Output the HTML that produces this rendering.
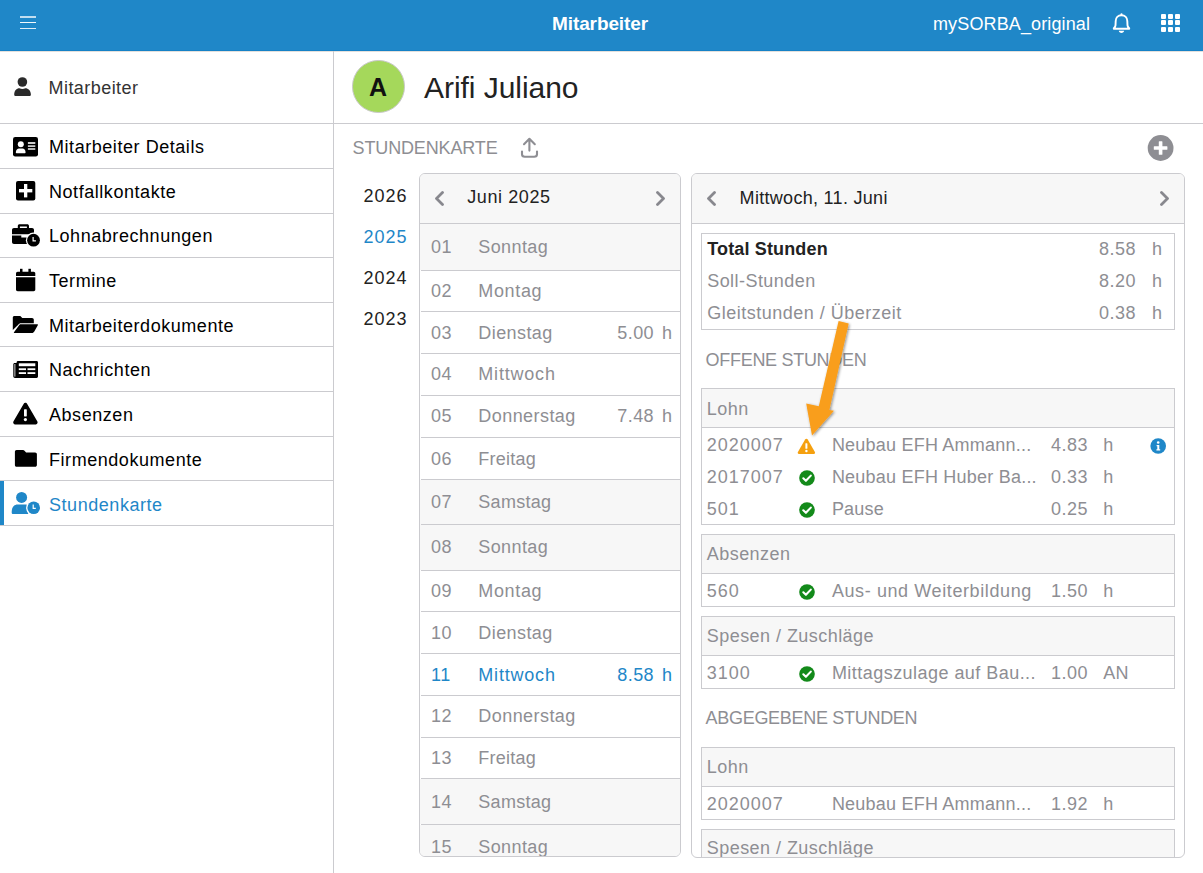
<!DOCTYPE html>
<html><head><meta charset="utf-8"><style>
html,body{margin:0;padding:0;}
body{width:1203px;height:873px;position:relative;overflow:hidden;background:#fff;font-family:"Liberation Sans",sans-serif;}
.t{position:absolute;white-space:nowrap;}
.r{position:absolute;}
</style></head><body>
<div class="r" style="left:0px;top:0px;width:1203px;height:51px;background:#1f87c8;"></div>
<div class="r" style="left:0px;top:50px;width:1203px;height:1px;background:#1581c6;"></div>
<div class="r" style="left:0px;top:51px;width:1203px;height:1px;background:#e4e0dc;"></div>
<div class="r" style="left:20px;top:16px;width:16px;height:1.7px;background:rgba(255,255,255,0.72);"></div>
<div class="r" style="left:20px;top:22px;width:16px;height:1.2px;background:rgba(255,255,255,0.95);"></div>
<div class="r" style="left:20px;top:27.8px;width:16px;height:1.4px;background:rgba(255,255,255,0.85);"></div>
<div class="t" style="left:552px;top:12.04px;font-size:19px;line-height:23.75px;color:#fff;font-weight:700;letter-spacing:-0.1px;">Mitarbeiter</div>
<div class="t" style="left:933px;top:12.51px;font-size:18px;line-height:22.5px;color:#fff;letter-spacing:0.13px;">mySORBA_original</div>
<svg class="r" style="left:1100px;top:5px" width="40" height="40" viewBox="0 0 40 40">
<circle cx="21.5" cy="9.3" r="1.1" fill="#fff"/>
<path d="M21.5 10.2 C25 10.2 27.3 12.6 27.3 16 L27.5 20.4 C27.6 21.7 28.4 22.6 29.2 23.2 L29.2 23.8 L13.8 23.8 L13.8 23.2 C14.6 22.6 15.4 21.7 15.5 20.4 L15.7 16 C15.7 12.6 18 10.2 21.5 10.2 Z" fill="none" stroke="#fff" stroke-width="1.9" stroke-linejoin="round"/>
<path d="M18.8 25.7 L24.1 25.7 C24 27.1 22.9 27.9 21.45 27.9 C20 27.9 18.9 27.1 18.8 25.7 Z" fill="#fff"/>
</svg>
<div class="r" style="left:1160.7px;top:14.0px;width:5.6px;height:4.9px;background:#fff;border-radius:1px;"></div>
<div class="r" style="left:1167.8px;top:14.0px;width:5.6px;height:4.9px;background:#fff;border-radius:1px;"></div>
<div class="r" style="left:1174.8px;top:14.0px;width:5.6px;height:4.9px;background:#fff;border-radius:1px;"></div>
<div class="r" style="left:1160.7px;top:20.3px;width:5.6px;height:4.9px;background:#fff;border-radius:1px;"></div>
<div class="r" style="left:1167.8px;top:20.3px;width:5.6px;height:4.9px;background:#fff;border-radius:1px;"></div>
<div class="r" style="left:1174.8px;top:20.3px;width:5.6px;height:4.9px;background:#fff;border-radius:1px;"></div>
<div class="r" style="left:1160.7px;top:26.7px;width:5.6px;height:4.9px;background:#fff;border-radius:1px;"></div>
<div class="r" style="left:1167.8px;top:26.7px;width:5.6px;height:4.9px;background:#fff;border-radius:1px;"></div>
<div class="r" style="left:1174.8px;top:26.7px;width:5.6px;height:4.9px;background:#fff;border-radius:1px;"></div>
<div class="r" style="left:333px;top:51px;width:1px;height:822px;background:#cbcbcf;"></div>
<div class="r" style="left:0px;top:123px;width:1203px;height:1px;background:#cbcbcf;"></div>
<div class="t" style="left:48.5px;top:76.51px;font-size:18px;line-height:22.5px;color:#333;letter-spacing:0.45px;">Mitarbeiter</div>
<svg class="r" style="left:12px;top:75px" width="22" height="24" viewBox="0 0 22 24">
<circle cx="10.4" cy="7" r="4.8" fill="#2a2a2a"/>
<path d="M2.2 19.5 C2.2 15.5 4.5 13.2 7.5 13.2 C8.3 13.6 9.3 13.9 10.4 13.9 C11.5 13.9 12.5 13.6 13.3 13.2 C16.3 13.2 18.9 15.5 18.9 19.5 C18.9 20.5 18.3 21.1 17.3 21.1 L3.8 21.1 C2.8 21.1 2.2 20.5 2.2 19.5 Z" fill="#2a2a2a"/>
</svg>
<div class="t" style="left:49px;top:135.91px;font-size:18px;line-height:22.5px;color:#000;letter-spacing:0.55px;">Mitarbeiter Details</div>
<div class="r" style="left:0px;top:168px;width:333px;height:1px;background:#cbcbcf;"></div>
<div class="t" style="left:49px;top:180.61px;font-size:18px;line-height:22.5px;color:#000;letter-spacing:0.55px;">Notfallkontakte</div>
<div class="r" style="left:0px;top:213px;width:333px;height:1px;background:#cbcbcf;"></div>
<div class="t" style="left:49px;top:225.31px;font-size:18px;line-height:22.5px;color:#000;letter-spacing:0.55px;">Lohnabrechnungen</div>
<div class="r" style="left:0px;top:257px;width:333px;height:1px;background:#cbcbcf;"></div>
<div class="t" style="left:49px;top:270.01px;font-size:18px;line-height:22.5px;color:#000;letter-spacing:0.55px;">Termine</div>
<div class="r" style="left:0px;top:302px;width:333px;height:1px;background:#cbcbcf;"></div>
<div class="t" style="left:49px;top:314.71px;font-size:18px;line-height:22.5px;color:#000;letter-spacing:0.55px;">Mitarbeiterdokumente</div>
<div class="r" style="left:0px;top:346px;width:333px;height:1px;background:#cbcbcf;"></div>
<div class="t" style="left:49px;top:359.41px;font-size:18px;line-height:22.5px;color:#000;letter-spacing:0.55px;">Nachrichten</div>
<div class="r" style="left:0px;top:391px;width:333px;height:1px;background:#cbcbcf;"></div>
<div class="t" style="left:49px;top:404.11px;font-size:18px;line-height:22.5px;color:#000;letter-spacing:0.55px;">Absenzen</div>
<div class="r" style="left:0px;top:436px;width:333px;height:1px;background:#cbcbcf;"></div>
<div class="t" style="left:49px;top:448.81px;font-size:18px;line-height:22.5px;color:#000;letter-spacing:0.55px;">Firmendokumente</div>
<div class="r" style="left:0px;top:480px;width:333px;height:1px;background:#cbcbcf;"></div>
<div class="t" style="left:49px;top:493.51px;font-size:18px;line-height:22.5px;color:#1f87c8;letter-spacing:0.55px;">Stundenkarte</div>
<div class="r" style="left:0px;top:525px;width:333px;height:1px;background:#cbcbcf;"></div>
<div class="r" style="left:0px;top:480.5px;width:3.7px;height:44px;background:#1f87c8;"></div>
<svg class="r" style="left:13px;top:136.5px" width="25" height="20" viewBox="0 0 25 20">
<rect x="0" y="0" width="25" height="19.5" rx="2.2" fill="#000"/>
<circle cx="7.8" cy="7.3" r="3" fill="#fff"/>
<path d="M2.8 15.5 C2.8 13 4.6 11.6 6 11.6 L9.6 11.6 C11 11.6 12.6 13 12.6 15.5 C12.6 15.9 12.3 16.2 11.9 16.2 L3.5 16.2 C3.1 16.2 2.8 15.9 2.8 15.5 Z" fill="#fff"/>
<rect x="14.9" y="5.2" width="7.4" height="1.6" fill="#fff"/>
<rect x="14.9" y="8.4" width="7.4" height="1.4" fill="#fff"/>
<rect x="14.9" y="11.3" width="7.4" height="1.4" fill="#fff"/>
</svg>
<svg class="r" style="left:16px;top:181px" width="20" height="20" viewBox="0 0 20 20">
<rect x="0" y="0" width="19.3" height="19.5" rx="2" fill="#000"/>
<rect x="3" y="8" width="13.3" height="3.4" fill="#fff"/>
<rect x="8" y="3" width="3.3" height="13.4" fill="#fff"/>
</svg>
<svg class="r" style="left:11px;top:223px" width="30" height="25" viewBox="0 0 30 25">
<path d="M6.8 5 L6.8 3 C6.8 1.8 7.6 1.2 8.6 1.2 L16.2 1.2 C17.2 1.2 18 1.8 18 3 L18 5 L21 5 C22.2 5 23 5.8 23 7 L23 11.2 L1 11.2 L1 7 C1 5.8 1.8 5 3 5 Z M8.9 3.4 L8.9 5 L15.9 5 L15.9 3.4 Z" fill="#000" fill-rule="evenodd"/>
<path d="M1 12.6 L10.3 12.6 L10.3 14.6 L15.5 14.6 C15.9 14.6 16.3 14.4 16.5 14 L16.5 20.9 L3 20.9 C1.8 20.9 1 20.1 1 18.9 Z" fill="#000"/>
<circle cx="22.5" cy="17.2" r="7.6" fill="#fff"/>
<circle cx="22.5" cy="17.2" r="6.4" fill="#000"/>
<path d="M22.1 14 L22.1 17.8 L24.9 17.8" fill="none" stroke="#fff" stroke-width="1.2"/>
</svg>
<svg class="r" style="left:16px;top:268px" width="20" height="24" viewBox="0 0 20 24">
<rect x="4" y="0.8" width="2.5" height="4" fill="#000"/>
<rect x="12.4" y="0.8" width="2.5" height="4" fill="#000"/>
<path d="M0 5.5 C0 4.5 0.7 3.8 1.7 3.8 L17.6 3.8 C18.6 3.8 19.3 4.5 19.3 5.5 L19.3 8 L0 8 Z" fill="#000"/>
<path d="M0 9.3 L19.3 9.3 L19.3 21.5 C19.3 22.5 18.6 23.2 17.6 23.2 L1.7 23.2 C0.7 23.2 0 22.5 0 21.5 Z" fill="#000"/>
</svg>
<svg class="r" style="left:12px;top:315px" width="27" height="20" viewBox="0 0 27 20">
<path d="M0.8 15 L0.8 2.5 C0.8 1.5 1.5 0.9 2.5 0.9 L8.3 0.9 L10.3 3 L20 3 C21 3 21.8 3.8 21.8 4.8 L21.8 8.3 L9 8.3 C7.6 8.3 6.9 8.8 6.3 9.8 Z" fill="#000"/>
<path d="M1.8 17.6 L7.3 9.9 C7.9 9.2 8.4 9.3 9.3 9.3 L25.3 9.3 C25.8 9.3 26.1 9.8 25.8 10.3 L22.3 16.5 C21.8 17.3 21 18 20 18 L2.3 18 C1.9 18 1.6 17.9 1.8 17.6 Z" fill="#000"/>
</svg>
<svg class="r" style="left:13px;top:360px" width="26" height="20" viewBox="0 0 26 20">
<path d="M3.6 2.3 C3.6 1.5 4.3 0.9 5 0.9 L23.6 0.9 C24.4 0.9 25 1.5 25 2.3 L25 16.6 C25 17.4 24.4 18 23.6 18 L2 18 C1 18 0.3 17.3 0.3 16.3 L0.3 4.3 C0.3 3.5 0.9 2.9 1.7 2.9 L3.6 2.9 Z" fill="#000"/>
<rect x="1.5" y="4" width="0.8" height="12.6" fill="#fff"/>
<rect x="5.8" y="3.3" width="16.5" height="2.9" fill="#fff"/>
<rect x="5.8" y="8.3" width="7.2" height="1.8" fill="#fff"/>
<rect x="14.5" y="8.3" width="7.8" height="1.8" fill="#fff"/>
<rect x="5.8" y="12.2" width="7.2" height="1.8" fill="#fff"/>
<rect x="14.5" y="12.2" width="7.8" height="1.8" fill="#fff"/>
</svg>
<svg class="r" style="left:12px;top:401px" width="27" height="25" viewBox="0 0 27 25">
<path d="M13.4 1.8 C14.2 1.8 14.8 2.3 15.2 3 L25.4 20.6 C26 21.8 25.3 23.4 23.9 23.4 L2.9 23.4 C1.5 23.4 0.8 21.8 1.4 20.6 L11.6 3 C12 2.3 12.6 1.8 13.4 1.8 Z" fill="#000"/>
<rect x="12" y="8.2" width="2.8" height="7.2" rx="0.6" fill="#fff"/>
<circle cx="13.4" cy="18.6" r="1.6" fill="#fff"/>
</svg>
<svg class="r" style="left:14px;top:449px" width="24" height="19" viewBox="0 0 24 19">
<path d="M0.9 2.8 C0.9 1.8 1.6 1 2.6 1 L9 1 C9.6 1 10.1 1.3 10.5 1.7 L12.1 3.4 L21.1 3.4 C22.1 3.4 22.9 4.2 22.9 5.2 L22.9 15.9 C22.9 16.9 22.1 17.7 21.1 17.7 L2.6 17.7 C1.6 17.7 0.9 16.9 0.9 15.9 Z" fill="#000"/>
</svg>
<svg class="r" style="left:10px;top:490px" width="32" height="26" viewBox="0 0 32 26">
<circle cx="11.6" cy="7.4" r="5.5" fill="#1f87c8"/>
<path d="M1.7 21.8 C1.7 17.7 4 14.6 7.6 14.6 L15.6 14.6 C16.6 14.6 17.6 14.9 18.2 15.3 C16.9 17.4 16.7 20.9 18.5 24 L3.2 24 C2.3 24 1.7 23.3 1.7 22.4 Z" fill="#1f87c8"/>
<circle cx="23.7" cy="17.8" r="7.6" fill="#fff"/>
<circle cx="23.7" cy="17.8" r="6.3" fill="#1f87c8"/>
<path d="M23.2 14.6 L23.2 18.4 L25.8 18.4" fill="none" stroke="#fff" stroke-width="1.2"/>
</svg>
<div class="r" style="left:352px;top:60px;width:50.5px;height:50.5px;border-radius:50%;background:#a5d85b;border:1px solid #c9c9c9;"></div>
<div class="t" style="left:369px;top:71.71px;font-size:25px;line-height:31.25px;color:#111;font-weight:700;">A</div>
<div class="t" style="left:424px;top:69.06px;font-size:30px;line-height:37.5px;color:#222;letter-spacing:-0.05px;">Arifi Juliano</div>
<div class="t" style="left:352.6px;top:137.31px;font-size:18px;line-height:22.5px;color:#8e8e93;letter-spacing:-0.15px;">STUNDENKARTE</div>
<svg class="r" style="left:515px;top:133px" width="30" height="30" viewBox="0 0 30 30">
<path d="M14.4 6.2 L14.4 17.6 M9 11.2 L14.4 5.8 L19.8 11.2" fill="none" stroke="#8e8e93" stroke-width="2.1" stroke-linecap="round" stroke-linejoin="round"/>
<path d="M7 18.6 L7 21.3 C7 23 8.2 23.8 9.8 23.8 L19.2 23.8 C20.8 23.8 22 23 22 21.3 L22 18.6" fill="none" stroke="#8e8e93" stroke-width="2.1" stroke-linecap="round"/>
</svg>
<svg class="r" style="left:1147px;top:135px" width="27" height="27" viewBox="0 0 27 27">
<circle cx="13.6" cy="13" r="12.9" fill="#8e8e93"/>
<rect x="6.8" y="11.2" width="13.6" height="3.6" rx="0.5" fill="#fff"/>
<rect x="11.8" y="6.2" width="3.6" height="13.6" rx="0.5" fill="#fff"/>
</svg>
<div class="t" style="left:363.5px;top:185.41px;font-size:18px;line-height:22.5px;color:#222;letter-spacing:1.0px;">2026</div>
<div class="t" style="left:363.5px;top:226.01px;font-size:18px;line-height:22.5px;color:#1f87c8;letter-spacing:1.0px;">2025</div>
<div class="t" style="left:363.5px;top:266.81px;font-size:18px;line-height:22.5px;color:#222;letter-spacing:1.0px;">2024</div>
<div class="t" style="left:363.5px;top:307.51px;font-size:18px;line-height:22.5px;color:#222;letter-spacing:1.0px;">2023</div>
<div class="r" style="left:419px;top:173px;width:260px;height:682px;border:1px solid #cbcbcf;border-radius:6px;overflow:hidden;background:#fff;">
<div class="r" style="left:-1px;top:-1px;width:262px;height:51px;background:#f7f7f7;"></div>
<div class="r" style="left:-1px;top:49px;width:262px;height:1px;background:#cbcbcf;"></div>
</div>
<div class="r" style="left:420px;top:174px;width:260px;height:682px;border-radius:5px;overflow:hidden;">
<div class="r" style="left:0.00px;top:49.50px;width:262px;height:46.5px;background:#f7f7f7;"></div>
<div class="r" style="left:1.00px;top:95.50px;width:262px;height:1px;background:#cbcbcf;"></div>
<div class="t" style="left:11.00px;top:61.66px;font-size:18px;line-height:22.5px;color:#8e8e93;letter-spacing:0.6px">01</div>
<div class="t" style="left:58.30px;top:61.66px;font-size:18px;line-height:22.5px;color:#8e8e93;letter-spacing:0.4px">Sonntag</div>
<div class="r" style="left:1.00px;top:137.30px;width:262px;height:1px;background:#cbcbcf;"></div>
<div class="t" style="left:11.00px;top:105.81px;font-size:18px;line-height:22.5px;color:#8e8e93;letter-spacing:0.6px">02</div>
<div class="t" style="left:58.30px;top:105.81px;font-size:18px;line-height:22.5px;color:#8e8e93;letter-spacing:0.65px">Montag</div>
<div class="r" style="left:1.00px;top:179.20px;width:262px;height:1px;background:#cbcbcf;"></div>
<div class="t" style="left:11.00px;top:147.66px;font-size:18px;line-height:22.5px;color:#8e8e93;letter-spacing:0.6px">03</div>
<div class="t" style="left:58.30px;top:147.66px;font-size:18px;line-height:22.5px;color:#8e8e93;letter-spacing:0.42px">Dienstag</div>
<div class="t" style="right:26.00px;top:147.66px;font-size:18px;line-height:22.5px;color:#8e8e93;letter-spacing:0.4px">5.00</div>
<div class="t" style="left:242.00px;top:147.66px;font-size:18px;line-height:22.5px;color:#8e8e93;letter-spacing:0px">h</div>
<div class="r" style="left:1.00px;top:220.80px;width:262px;height:1px;background:#cbcbcf;"></div>
<div class="t" style="left:11.00px;top:189.41px;font-size:18px;line-height:22.5px;color:#8e8e93;letter-spacing:0.6px">04</div>
<div class="t" style="left:58.30px;top:189.41px;font-size:18px;line-height:22.5px;color:#8e8e93;letter-spacing:0.8px">Mittwoch</div>
<div class="r" style="left:1.00px;top:263.10px;width:262px;height:1px;background:#cbcbcf;"></div>
<div class="t" style="left:11.00px;top:231.36px;font-size:18px;line-height:22.5px;color:#8e8e93;letter-spacing:0.6px">05</div>
<div class="t" style="left:58.30px;top:231.36px;font-size:18px;line-height:22.5px;color:#8e8e93;letter-spacing:0.44px">Donnerstag</div>
<div class="t" style="right:26.00px;top:231.36px;font-size:18px;line-height:22.5px;color:#8e8e93;letter-spacing:0.4px">7.48</div>
<div class="t" style="left:242.00px;top:231.36px;font-size:18px;line-height:22.5px;color:#8e8e93;letter-spacing:0px">h</div>
<div class="r" style="left:1.00px;top:305.10px;width:262px;height:1px;background:#cbcbcf;"></div>
<div class="t" style="left:11.00px;top:273.51px;font-size:18px;line-height:22.5px;color:#8e8e93;letter-spacing:0.6px">06</div>
<div class="t" style="left:58.30px;top:273.51px;font-size:18px;line-height:22.5px;color:#8e8e93;letter-spacing:0.25px">Freitag</div>
<div class="r" style="left:0.00px;top:305.60px;width:262px;height:45.10000000000002px;background:#f7f7f7;"></div>
<div class="r" style="left:1.00px;top:350.20px;width:262px;height:1px;background:#cbcbcf;"></div>
<div class="t" style="left:11.00px;top:317.06px;font-size:18px;line-height:22.5px;color:#8e8e93;letter-spacing:0.6px">07</div>
<div class="t" style="left:58.30px;top:317.06px;font-size:18px;line-height:22.5px;color:#8e8e93;letter-spacing:0.3px">Samstag</div>
<div class="r" style="left:0.00px;top:350.70px;width:262px;height:45.69999999999993px;background:#f7f7f7;"></div>
<div class="r" style="left:1.00px;top:395.90px;width:262px;height:1px;background:#cbcbcf;"></div>
<div class="t" style="left:11.00px;top:362.46px;font-size:18px;line-height:22.5px;color:#8e8e93;letter-spacing:0.6px">08</div>
<div class="t" style="left:58.30px;top:362.46px;font-size:18px;line-height:22.5px;color:#8e8e93;letter-spacing:0.4px">Sonntag</div>
<div class="r" style="left:1.00px;top:437.30px;width:262px;height:1px;background:#cbcbcf;"></div>
<div class="t" style="left:11.00px;top:406.01px;font-size:18px;line-height:22.5px;color:#8e8e93;letter-spacing:0.6px">09</div>
<div class="t" style="left:58.30px;top:406.01px;font-size:18px;line-height:22.5px;color:#8e8e93;letter-spacing:0.65px">Montag</div>
<div class="r" style="left:1.00px;top:479.30px;width:262px;height:1px;background:#cbcbcf;"></div>
<div class="t" style="left:11.00px;top:447.71px;font-size:18px;line-height:22.5px;color:#8e8e93;letter-spacing:0.6px">10</div>
<div class="t" style="left:58.30px;top:447.71px;font-size:18px;line-height:22.5px;color:#8e8e93;letter-spacing:0.42px">Dienstag</div>
<div class="r" style="left:1.00px;top:520.90px;width:262px;height:1px;background:#cbcbcf;"></div>
<div class="t" style="left:11.00px;top:489.51px;font-size:18px;line-height:22.5px;color:#1f87c8;letter-spacing:0.6px">11</div>
<div class="t" style="left:58.30px;top:489.51px;font-size:18px;line-height:22.5px;color:#1f87c8;letter-spacing:0.8px">Mittwoch</div>
<div class="t" style="right:26.00px;top:489.51px;font-size:18px;line-height:22.5px;color:#1f87c8;letter-spacing:0.4px">8.58</div>
<div class="t" style="left:242.00px;top:489.51px;font-size:18px;line-height:22.5px;color:#1f87c8;letter-spacing:0px">h</div>
<div class="r" style="left:1.00px;top:562.50px;width:262px;height:1px;background:#cbcbcf;"></div>
<div class="t" style="left:11.00px;top:531.11px;font-size:18px;line-height:22.5px;color:#8e8e93;letter-spacing:0.6px">12</div>
<div class="t" style="left:58.30px;top:531.11px;font-size:18px;line-height:22.5px;color:#8e8e93;letter-spacing:0.44px">Donnerstag</div>
<div class="r" style="left:1.00px;top:604.40px;width:262px;height:1px;background:#cbcbcf;"></div>
<div class="t" style="left:11.00px;top:572.86px;font-size:18px;line-height:22.5px;color:#8e8e93;letter-spacing:0.6px">13</div>
<div class="t" style="left:58.30px;top:572.86px;font-size:18px;line-height:22.5px;color:#8e8e93;letter-spacing:0.25px">Freitag</div>
<div class="r" style="left:0.00px;top:604.90px;width:262px;height:45.60000000000002px;background:#f7f7f7;"></div>
<div class="r" style="left:1.00px;top:650.00px;width:262px;height:1px;background:#cbcbcf;"></div>
<div class="t" style="left:11.00px;top:616.61px;font-size:18px;line-height:22.5px;color:#8e8e93;letter-spacing:0.6px">14</div>
<div class="t" style="left:58.30px;top:616.61px;font-size:18px;line-height:22.5px;color:#8e8e93;letter-spacing:0.3px">Samstag</div>
<div class="r" style="left:0.00px;top:650.50px;width:262px;height:46.0px;background:#f7f7f7;"></div>
<div class="r" style="left:1.00px;top:696.00px;width:262px;height:1px;background:#cbcbcf;"></div>
<div class="t" style="left:11.00px;top:662.41px;font-size:18px;line-height:22.5px;color:#8e8e93;letter-spacing:0.6px">15</div>
<div class="t" style="left:58.30px;top:662.41px;font-size:18px;line-height:22.5px;color:#8e8e93;letter-spacing:0.4px">Sonntag</div>
</div>
<svg class="r" style="left:435px;top:190.5px" width="9" height="15" viewBox="-0.5 -0.5 9 15"><path d="M7 1 L1 7 L7 13" fill="none" stroke="#88888e" stroke-width="2.8" stroke-linecap="round" stroke-linejoin="round"/></svg>
<svg class="r" style="left:656px;top:190.5px" width="9" height="15" viewBox="-0.5 -0.5 9 15"><path d="M1 1 L7 7 L1 13" fill="none" stroke="#88888e" stroke-width="2.8" stroke-linecap="round" stroke-linejoin="round"/></svg>
<div class="t" style="left:467.2px;top:186.41px;font-size:18px;line-height:22.5px;color:#222;letter-spacing:0.6px;">Juni 2025</div>
<div class="r" style="left:691px;top:173px;width:492px;height:683px;border:1px solid #cbcbcf;border-radius:6px;background:#fff;"></div>
<div class="r" style="left:692px;top:174px;width:492px;height:683px;border-radius:5px;overflow:hidden;">
<div class="r" style="left:0.00px;top:0.00px;width:494px;height:50px;background:#f7f7f7;"></div>
<div class="r" style="left:0.00px;top:49.00px;width:494px;height:1px;background:#cbcbcf;"></div>
<div class="r" style="left:9.00px;top:59.00px;width:472px;height:95px;border:1px solid #cbcbcf;"></div>
<div class="t" style="left:15.20px;top:64.41px;font-size:18px;line-height:22.5px;color:#222;letter-spacing:0.15px;font-weight:700;">Total Stunden</div>
<div class="t" style="left:15.20px;top:96.31px;font-size:18px;line-height:22.5px;color:#8e8e93;letter-spacing:0.45px;">Soll-Stunden</div>
<div class="t" style="left:15.20px;top:127.71px;font-size:18px;line-height:22.5px;color:#8e8e93;letter-spacing:0.5px;">Gleitstunden / Überzeit</div>
<div class="t" style="right:48.00px;top:64.41px;font-size:18px;line-height:22.5px;color:#8e8e93;letter-spacing:0.5px;">8.58</div>
<div class="t" style="left:460.00px;top:64.41px;font-size:18px;line-height:22.5px;color:#8e8e93;letter-spacing:0px;">h</div>
<div class="t" style="right:48.00px;top:96.31px;font-size:18px;line-height:22.5px;color:#8e8e93;letter-spacing:0.5px;">8.20</div>
<div class="t" style="left:460.00px;top:96.31px;font-size:18px;line-height:22.5px;color:#8e8e93;letter-spacing:0px;">h</div>
<div class="t" style="right:48.00px;top:127.71px;font-size:18px;line-height:22.5px;color:#8e8e93;letter-spacing:0.5px;">0.38</div>
<div class="t" style="left:460.00px;top:127.71px;font-size:18px;line-height:22.5px;color:#8e8e93;letter-spacing:0px;">h</div>
<div class="t" style="left:13.60px;top:174.51px;font-size:18px;line-height:22.5px;color:#8e8e93;letter-spacing:-0.3px;">OFFENE STUNDEN</div>
<div class="r" style="left:9.00px;top:214.00px;width:472px;height:135px;border:1px solid #cbcbcf;"></div>
<div class="r" style="left:10.00px;top:215.00px;width:472px;height:38px;background:#f7f7f7;"></div>
<div class="r" style="left:10.00px;top:253.00px;width:472px;height:1px;background:#cbcbcf;"></div>
<div class="t" style="left:14.80px;top:223.91px;font-size:18px;line-height:22.5px;color:#8e8e93;letter-spacing:0.45px;">Lohn</div>
<div class="t" style="left:14.80px;top:260.01px;font-size:18px;line-height:22.5px;color:#8e8e93;letter-spacing:1.0px;">2020007</div>
<svg class="r" style="left:105px;top:263.50px" width="19" height="17" viewBox="0 0 19 17"><path d="M9.4 0.8 C10 0.8 10.4 1.1 10.7 1.6 L17.9 14 C18.4 14.9 17.9 16 16.9 16 L1.9 16 C0.9 16 0.4 14.9 0.9 14 L8.1 1.6 C8.4 1.1 8.8 0.8 9.4 0.8 Z" fill="#f5a00f"/><rect x="8.4" y="5.2" width="2" height="5.6" rx="0.5" fill="#fff"/><circle cx="9.4" cy="13" r="1.2" fill="#fff"/></svg>
<div class="t" style="left:139.90px;top:260.01px;font-size:18px;line-height:22.5px;color:#8e8e93;letter-spacing:0.22px;">Neubau EFH Ammann...</div>
<div class="t" style="right:96.00px;top:260.01px;font-size:18px;line-height:22.5px;color:#8e8e93;letter-spacing:0.5px;">4.83</div>
<div class="t" style="left:411.20px;top:260.01px;font-size:18px;line-height:22.5px;color:#8e8e93;letter-spacing:0.3px;">h</div>
<div class="t" style="left:14.80px;top:292.01px;font-size:18px;line-height:22.5px;color:#8e8e93;letter-spacing:1.0px;">2017007</div>
<svg class="r" style="left:106.5px;top:295.90px" width="16" height="16" viewBox="0 0 16 16"><circle cx="8" cy="8" r="7.8" fill="#138a1a"/><path d="M4.3 8.3 L6.9 10.8 L11.8 5.6" fill="none" stroke="#fff" stroke-width="2.1" stroke-linecap="round" stroke-linejoin="round"/></svg>
<div class="t" style="left:139.90px;top:292.01px;font-size:18px;line-height:22.5px;color:#8e8e93;letter-spacing:0.22px;">Neubau EFH Huber Ba...</div>
<div class="t" style="right:96.00px;top:292.01px;font-size:18px;line-height:22.5px;color:#8e8e93;letter-spacing:0.5px;">0.33</div>
<div class="t" style="left:411.20px;top:292.01px;font-size:18px;line-height:22.5px;color:#8e8e93;letter-spacing:0.3px;">h</div>
<div class="t" style="left:14.80px;top:324.21px;font-size:18px;line-height:22.5px;color:#8e8e93;letter-spacing:1.0px;">501</div>
<svg class="r" style="left:106.5px;top:328.10px" width="16" height="16" viewBox="0 0 16 16"><circle cx="8" cy="8" r="7.8" fill="#138a1a"/><path d="M4.3 8.3 L6.9 10.8 L11.8 5.6" fill="none" stroke="#fff" stroke-width="2.1" stroke-linecap="round" stroke-linejoin="round"/></svg>
<div class="t" style="left:139.90px;top:324.21px;font-size:18px;line-height:22.5px;color:#8e8e93;letter-spacing:0.22px;">Pause</div>
<div class="t" style="right:96.00px;top:324.21px;font-size:18px;line-height:22.5px;color:#8e8e93;letter-spacing:0.5px;">0.25</div>
<div class="t" style="left:411.20px;top:324.21px;font-size:18px;line-height:22.5px;color:#8e8e93;letter-spacing:0.3px;">h</div>
<svg class="r" style="left:458px;top:264px" width="17" height="17" viewBox="0 0 17 17"><circle cx="8.2" cy="8" r="7.8" fill="#1f87c8"/><circle cx="8.2" cy="4.5" r="1.3" fill="#fff"/><path d="M6.6 6.9 L9.3 6.9 L9.3 11.3 L10.2 11.3 L10.2 12.6 L6.4 12.6 L6.4 11.3 L7.3 11.3 L7.3 8.2 L6.6 8.2 Z" fill="#fff"/></svg>
<div class="r" style="left:9.00px;top:360.00px;width:472px;height:71px;border:1px solid #cbcbcf;"></div>
<div class="r" style="left:10.00px;top:361.00px;width:472px;height:38px;background:#f7f7f7;"></div>
<div class="r" style="left:10.00px;top:399.00px;width:472px;height:1px;background:#cbcbcf;"></div>
<div class="t" style="left:14.80px;top:369.41px;font-size:18px;line-height:22.5px;color:#8e8e93;letter-spacing:0.45px;">Absenzen</div>
<div class="t" style="left:14.80px;top:406.01px;font-size:18px;line-height:22.5px;color:#8e8e93;letter-spacing:1.0px;">560</div>
<svg class="r" style="left:106.5px;top:409.90px" width="16" height="16" viewBox="0 0 16 16"><circle cx="8" cy="8" r="7.8" fill="#138a1a"/><path d="M4.3 8.3 L6.9 10.8 L11.8 5.6" fill="none" stroke="#fff" stroke-width="2.1" stroke-linecap="round" stroke-linejoin="round"/></svg>
<div class="t" style="left:139.90px;top:406.01px;font-size:18px;line-height:22.5px;color:#8e8e93;letter-spacing:0.6px;">Aus- und Weiterbildung</div>
<div class="t" style="right:96.00px;top:406.01px;font-size:18px;line-height:22.5px;color:#8e8e93;letter-spacing:0.5px;">1.50</div>
<div class="t" style="left:411.20px;top:406.01px;font-size:18px;line-height:22.5px;color:#8e8e93;letter-spacing:0.3px;">h</div>
<div class="r" style="left:9.00px;top:442.00px;width:472px;height:71px;border:1px solid #cbcbcf;"></div>
<div class="r" style="left:10.00px;top:443.00px;width:472px;height:38px;background:#f7f7f7;"></div>
<div class="r" style="left:10.00px;top:481.00px;width:472px;height:1px;background:#cbcbcf;"></div>
<div class="t" style="left:14.80px;top:450.71px;font-size:18px;line-height:22.5px;color:#8e8e93;letter-spacing:0.45px;">Spesen / Zuschläge</div>
<div class="t" style="left:14.80px;top:488.01px;font-size:18px;line-height:22.5px;color:#8e8e93;letter-spacing:1.0px;">3100</div>
<svg class="r" style="left:106.5px;top:491.90px" width="16" height="16" viewBox="0 0 16 16"><circle cx="8" cy="8" r="7.8" fill="#138a1a"/><path d="M4.3 8.3 L6.9 10.8 L11.8 5.6" fill="none" stroke="#fff" stroke-width="2.1" stroke-linecap="round" stroke-linejoin="round"/></svg>
<div class="t" style="left:139.90px;top:488.01px;font-size:18px;line-height:22.5px;color:#8e8e93;letter-spacing:0.46px;">Mittagszulage auf Bau...</div>
<div class="t" style="right:96.00px;top:488.01px;font-size:18px;line-height:22.5px;color:#8e8e93;letter-spacing:0.5px;">1.00</div>
<div class="t" style="left:411.20px;top:488.01px;font-size:18px;line-height:22.5px;color:#8e8e93;letter-spacing:0.3px;">AN</div>
<div class="t" style="left:13.60px;top:533.01px;font-size:18px;line-height:22.5px;color:#8e8e93;letter-spacing:-0.3px;">ABGEGEBENE STUNDEN</div>
<div class="r" style="left:9.00px;top:573.00px;width:472px;height:71px;border:1px solid #cbcbcf;"></div>
<div class="r" style="left:10.00px;top:574.00px;width:472px;height:38px;background:#f7f7f7;"></div>
<div class="r" style="left:10.00px;top:612.00px;width:472px;height:1px;background:#cbcbcf;"></div>
<div class="t" style="left:14.80px;top:581.81px;font-size:18px;line-height:22.5px;color:#8e8e93;letter-spacing:0.45px;">Lohn</div>
<div class="t" style="left:14.80px;top:618.51px;font-size:18px;line-height:22.5px;color:#8e8e93;letter-spacing:1.0px;">2020007</div>
<div class="t" style="left:139.90px;top:618.51px;font-size:18px;line-height:22.5px;color:#8e8e93;letter-spacing:0.22px;">Neubau EFH Ammann...</div>
<div class="t" style="right:96.00px;top:618.51px;font-size:18px;line-height:22.5px;color:#8e8e93;letter-spacing:0.5px;">1.92</div>
<div class="t" style="left:411.20px;top:618.51px;font-size:18px;line-height:22.5px;color:#8e8e93;letter-spacing:0.3px;">h</div>
<div class="r" style="left:9.00px;top:655.00px;width:472px;height:69px;border:1px solid #cbcbcf;"></div>
<div class="r" style="left:10.00px;top:656.00px;width:472px;height:39px;background:#f7f7f7;"></div>
<div class="r" style="left:10.00px;top:695.00px;width:472px;height:1px;background:#cbcbcf;"></div>
<div class="t" style="left:14.80px;top:663.01px;font-size:18px;line-height:22.5px;color:#8e8e93;letter-spacing:0.45px;">Spesen / Zuschläge</div>
</div>
<svg class="r" style="left:706.5px;top:190.5px" width="9" height="15" viewBox="-0.5 -0.5 9 15"><path d="M7 1 L1 7 L7 13" fill="none" stroke="#88888e" stroke-width="2.8" stroke-linecap="round" stroke-linejoin="round"/></svg>
<svg class="r" style="left:1160px;top:190.5px" width="9" height="15" viewBox="-0.5 -0.5 9 15"><path d="M1 1 L7 7 L1 13" fill="none" stroke="#88888e" stroke-width="2.8" stroke-linecap="round" stroke-linejoin="round"/></svg>
<div class="t" style="left:739.6px;top:186.81px;font-size:18px;line-height:22.5px;color:#222;letter-spacing:0.3px;">Mittwoch, 11. Juni</div>
<svg class="r" style="left:0;top:0" width="1203" height="873" viewBox="0 0 1203 873">
<defs><filter id="sh" x="-50%" y="-50%" width="200%" height="200%"><feGaussianBlur in="SourceAlpha" stdDeviation="1.6"/><feOffset dx="0.5" dy="1" result="b"/><feComponentTransfer><feFuncA type="linear" slope="0.45"/></feComponentTransfer><feMerge><feMergeNode/><feMergeNode in="SourceGraphic"/></feMerge></filter></defs>
<path d="M838.6 321.1 L848.7 323.4 L829.4 410 L834 410.8 L812 435.5 L806.2 403.5 L818.8 406.2 Z" fill="#f99e1b" filter="url(#sh)"/>
</svg>
</body></html>
